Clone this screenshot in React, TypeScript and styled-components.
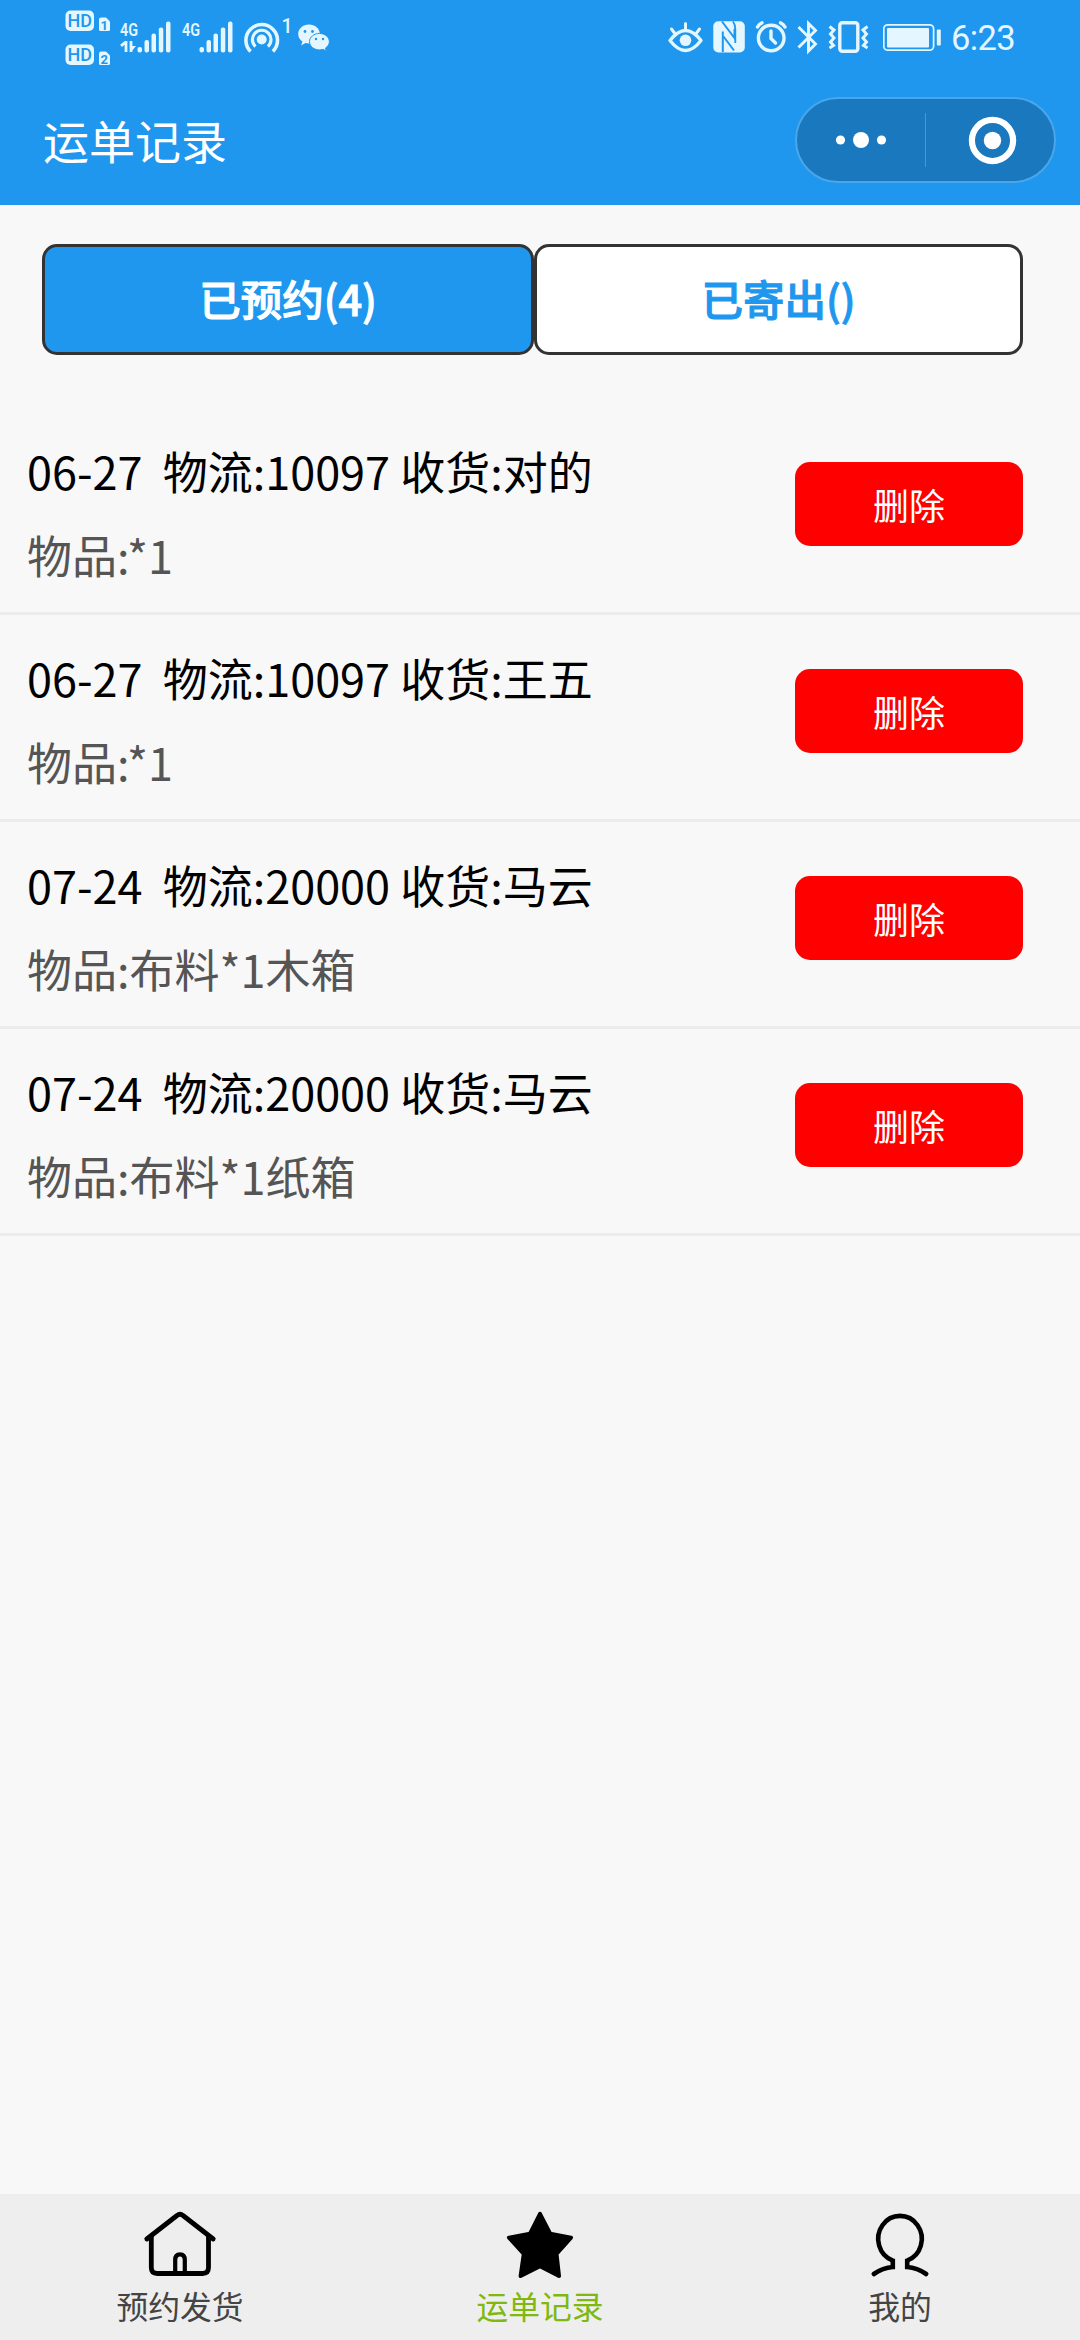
import React from "react";
import styled, { createGlobalStyle } from "styled-components";

const BLUE = "#1f97ee";
const PALE = "#e4f6ff";
const CJK = `"Noto Sans CJK SC", "Noto Sans", sans-serif`;

const GlobalStyle = createGlobalStyle`
  * { box-sizing: border-box; }
  body { margin: 0; background: #f8f8f8; font-family: ${CJK}; }
`;

const Screen = styled.div`
  display: flex;
  flex-direction: column;
  width: 1080px;
  height: 2340px;
  overflow: hidden;
  background: #f8f8f8;
`;

const Header = styled.header`
  height: 205px;
  flex: none;
  background: ${BLUE};
`;

const StatusBar = styled.div`
  display: flex;
  justify-content: space-between;
  height: 75px;
  padding: 0 63px 0 64px;
`;

const StatusGroup = styled.div`
  display: flex;
  align-items: flex-start;
`;

const Glyph = styled.svg<{ $gap?: number }>`
  display: block;
  flex: none;
  margin-left: ${(p) => p.$gap ?? 0}px;
`;

const Clock = styled.span`
  width: 66px;
  margin-left: 8px;
  font: 400 34.5px/76px Roboto, sans-serif;
  letter-spacing: -0.6px;
  white-space: nowrap;
  color: ${PALE};
`;

const TitleBar = styled.div`
  display: flex;
  align-items: center;
  justify-content: space-between;
  height: 130px;
  padding: 0 24px 0 43px;
`;

const Title = styled.h1`
  margin: 0;
  padding-bottom: 3px;
  font-size: 46px;
  line-height: 60px;
  font-weight: 400;
  color: #fff;
`;

const Capsule = styled.div`
  display: flex;
  align-items: center;
  width: 261px;
  height: 86px;
  border: 2px solid #4aa6ea;
  border-radius: 43px;
  background: #1978be;
`;

const CapsuleHalf = styled.div`
  display: flex;
  flex: 1;
  align-items: center;
  justify-content: center;
`;

const CapsuleDivider = styled.div`
  width: 1px;
  height: 54px;
  background: #4a97d2;
`;

const Tabs = styled.nav`
  display: flex;
  flex: none;
  height: 111px;
  margin: 39px 57px 53px 42px;
`;

const Tab = styled.button<{ $active?: boolean }>`
  flex: ${(p) => (p.$active ? "0 0 492px" : "1")};
  padding: 0 0 3px;
  border: 3px solid #333;
  border-radius: 15px;
  background: ${(p) => (p.$active ? BLUE : "#fff")};
  color: ${(p) => (p.$active ? "#fff" : BLUE)};
  font: 500 41.5px/60px ${CJK};
  -webkit-text-stroke: 1px currentColor;
`;

const List = styled.ul`
  flex: 1;
  margin: 0;
  padding: 0;
  list-style: none;
`;

const Row = styled.li`
  display: flex;
  align-items: center;
  justify-content: space-between;
  height: 207px;
  padding: 0 57px 0 27px;
  border-bottom: 3px solid #ececec;
`;

const Summary = styled.div`
  padding-top: 6px;
`;

const Line = styled.p<{ $muted?: boolean }>`
  margin: 0;
  font-size: 45px;
  line-height: 84px;
  white-space: pre;
  color: ${(p) => (p.$muted ? "#555" : "#000")};
`;

const DeleteButton = styled.button`
  width: 228px;
  height: 84px;
  margin-top: -12px;
  padding: 0;
  border: 0;
  border-radius: 15px;
  background: #fe0000;
  color: #fff;
  font: 400 36px/50px ${CJK};
`;

const BottomBar = styled.nav`
  display: flex;
  flex: none;
  height: 146px;
  background: #eeeeee;
`;

const BottomItem = styled.a<{ $active?: boolean }>`
  display: flex;
  flex: 1;
  flex-direction: column;
  align-items: center;
  padding-top: 10px;
  font-size: 31.8px;
  line-height: 40px;
  color: ${(p) => (p.$active ? "#7fb80e" : "#444")};
`;

const BottomIcon = styled.svg`
  display: block;
  width: 80px;
  height: 80px;
  margin-bottom: 1px;
`;

const SimBadges = () => (
  <Glyph width="48" height="75" viewBox="64 0 48 75" fill={PALE}>
    {[0, 34].map((y, i) => (
      <g key={y} transform={`translate(0 ${y})`}>
        <rect x="65.5" y="10.5" width="28.5" height="20.5" rx="5" />
        <text x="79.7" y="27.2" textAnchor="middle" fontFamily="Roboto, sans-serif" fontSize="18" fontWeight="500" fill={BLUE}>HD</text>
        <path d="M99 19.500q0-2 2-2h5l4 4v8q0 1.500-1.500 1.500h-8q-1.500 0-1.500-1.500z" />
        <text x="104.300" y="29.500" textAnchor="middle" fontFamily="Roboto, sans-serif" fontSize="13" fontWeight="700" fill={BLUE}>{i + 1}</text>
      </g>
    ))}
  </Glyph>
);

const Signal = ({ data, gap }: { data?: boolean; gap: number }) => (
  <Glyph $gap={gap} width="52" height="75" viewBox="119 0 52 75" fill={PALE}>
    <text x="120" y="35.500" fontFamily="Roboto, sans-serif" fontSize="19" fontWeight="600" textLength="18" lengthAdjust="spacingAndGlyphs">4G</text>
    {data && (
      <>
        <path d="M121 45.800l5-4M126 41v11M131 41v11" fill="none" stroke={PALE} strokeWidth="2.800" />
        <path d="M131 52v-6h5z" />
      </>
    )}
    <rect x="137.500" y="47" width="4.500" height="5.500" rx="2" />
    <rect x="144.500" y="40" width="4.500" height="12.500" rx="2" />
    <rect x="151.500" y="33.500" width="4.500" height="19" rx="2" />
    <rect x="158.800" y="27.500" width="4.500" height="25" rx="2" />
    <rect x="166" y="21.500" width="4.500" height="31" rx="2" />
  </Glyph>
);

const Hotspot = () => (
  <Glyph $gap={10} width="50" height="75" viewBox="242 0 50 75" fill="none" stroke={PALE} strokeWidth="3.6">
    <circle cx="260.700" cy="39.500" r="5" fill={PALE} stroke="none" />
    <path d="M254.500 46.500a9.300 9.300 0 1 1 12.400 0" strokeWidth="3.200" />
    <path d="M249.500 51.500a15.800 15.800 0 1 1 22.400 0" />
    <text x="280.500" y="32.500" fontFamily="Roboto, sans-serif" fontSize="19.5" fontWeight="500" fill={PALE} stroke="none">1</text>
  </Glyph>
);

const Chat = () => (
  <Glyph $gap={4} width="34" height="75" viewBox="296 0 34 75" fill={PALE}>
    <path d="M308 24.500c-6 0-10.800 4.200-10.800 9.500 0 3.200 1.500 5.600 4.200 7.600l-1.300 3.900 4.400-2.500 3.500.5c6 0 10.800-4 10.800-9.500s-4.800-9.500-10.800-9.500z" />
    <path d="M318.500 33.400c-5.700 0-10 3.900-10 8.300s4.300 8.200 10 8.200c1.200 0 2.400-.2 3.600-.6l3.300 1.900-.9-3.200c2.400-1.700 3.900-3.900 3.900-6.300 0-4.400-4.300-8.300-9.900-8.300z" stroke={BLUE} strokeWidth="1" />
    <g fill={BLUE}>
      <circle cx="304" cy="31.500" r="1.400" />
      <circle cx="311.500" cy="31.500" r="1.400" />
      <circle cx="315" cy="39" r="1.200" />
      <circle cx="322" cy="39" r="1.200" />
    </g>
  </Glyph>
);

const Eye = () => (
  <Glyph width="37" height="75" viewBox="667 0 37 75" fill="none" stroke={PALE} strokeWidth="3.400" strokeLinecap="round">
    <path d="M670 40.500q15.500-20 31 0q-15.500 20-31 0z" strokeLinejoin="round" />
    <circle cx="685.500" cy="40.300" r="5.800" fill={PALE} stroke="none" />
    <path d="M685.500 23.500v6M671.500 29l3 4M699.500 29l-3 4" strokeWidth="3" />
  </Glyph>
);

const Nfc = () => (
  <Glyph $gap={9} width="32" height="75" viewBox="713 0 32 75">
    <rect x="713.300" y="21.300" width="31.500" height="31.200" rx="5" fill={PALE} />
    <path d="M722.800 52V31.500M723.500 36.500l10.500 14M722 21.500L734.500 38V29" fill="none" stroke={BLUE} strokeWidth="2" />
    <path d="M733 21.500q2.300 3 2.300 8V43" fill="none" stroke={BLUE} strokeWidth="1.800" />
  </Glyph>
);

const Alarm = () => (
  <Glyph $gap={10} width="34" height="75" viewBox="755 0 34 75" fill="none" stroke={PALE} strokeWidth="3.400" strokeLinecap="round">
    <circle cx="771.200" cy="38" r="12.800" />
    <path d="M771 31v7.500l4.500 4.500" />
    <path d="M757.500 27q1.500-3 4.500-4.200M785 27q-1.500-3-4.500-4.200" />
  </Glyph>
);

const Bluetooth = () => (
  <Glyph $gap={7} width="24" height="75" viewBox="796 0 24 75" fill="none" stroke={PALE} strokeWidth="2.900" strokeLinejoin="miter">
    <path d="M798.500 27l17 17-7 7V23.500l7 7-17 17" />
  </Glyph>
);

const Vibrate = () => (
  <Glyph $gap={8} width="42" height="75" viewBox="828 0 42 75" fill="none" stroke={PALE} strokeWidth="3.400">
    <rect x="839.800" y="22.800" width="18" height="28.400" rx="2.500" />
    <path d="M829.500 26.500l4.500 3.500-3.500 4 3.500 4-3.500 4 3 3.500-4 2.500M867.500 26.500l-4.500 3.500 3.500 4-3.500 4 3.500 4-3 3.500 4 2.500" strokeWidth="3" />
  </Glyph>
);

const Battery = () => (
  <Glyph $gap={13} width="60" height="75" viewBox="883 0 60 75">
    <rect x="883.800" y="24.800" width="49.800" height="25.400" rx="4" fill="none" stroke={PALE} strokeWidth="1.700" />
    <rect x="887" y="28" width="42" height="19.500" rx="1" fill={PALE} />
    <rect x="936.800" y="29.500" width="4" height="16" rx="1" fill={PALE} />
  </Glyph>
);

const HomeIcon = () => (
  <BottomIcon viewBox="140 2204 80 80" fill="none" stroke="#000" strokeWidth="4.800" strokeLinecap="round" strokeLinejoin="round">
    <path d="M146.800 2239L177 2215.500q3-2.600 6 0L213.200 2239" />
    <path d="M151.300 2237v30.500q0 6 6 6h45.200q6 0 6-6V2237" />
    <path d="M175.200 2273v-13q0-5.600 4.800-5.600t4.800 5.600v13" strokeWidth="4.200" />
  </BottomIcon>
);

const StarIcon = () => (
  <BottomIcon viewBox="500 2204 80 80" fill="#000" stroke="#000" strokeWidth="4" strokeLinejoin="round">
    <path d="M540 2213.800L550.200 2233.600L571 2237.600L556.500 2253.800L559 2276L540 2266.200L520.600 2276L523.800 2253.800L509 2237.600L530 2233.600Z" />
  </BottomIcon>
);

const UserIcon = () => (
  <BottomIcon viewBox="860 2204 80 80" fill="none" stroke="#000" strokeWidth="4.600" strokeLinecap="round">
    <path d="M873.800 2274q9-6.300 19-7v-6.400A21.800 23 0 1 1 907.200 2260.600v6.400q10 .7 19 7" />
  </BottomIcon>
);

const waybills = [
  { title: "06-27  物流:10097 收货:对的", goods: "物品:*1" },
  { title: "06-27  物流:10097 收货:王五", goods: "物品:*1" },
  { title: "07-24  物流:20000 收货:马云", goods: "物品:布料*1木箱" },
  { title: "07-24  物流:20000 收货:马云", goods: "物品:布料*1纸箱" },
];

export default function App() {
  return (
    <Screen>
      <GlobalStyle />
      <Header>
        <StatusBar>
          <StatusGroup>
            <SimBadges />
            <Signal gap={7} data />
            <Signal gap={10} />
            <Hotspot />
            <Chat />
          </StatusGroup>
          <StatusGroup>
            <Eye />
            <Nfc />
            <Alarm />
            <Bluetooth />
            <Vibrate />
            <Battery />
            <Clock>6:23</Clock>
          </StatusGroup>
        </StatusBar>
        <TitleBar>
          <Title>运单记录</Title>
          <Capsule>
            <CapsuleHalf>
              <svg width="52" height="20" fill="#fff">
                <circle cx="5.500" cy="10" r="4.600" />
                <circle cx="26" cy="10" r="8" />
                <circle cx="46.500" cy="10" r="4.600" />
              </svg>
            </CapsuleHalf>
            <CapsuleDivider />
            <CapsuleHalf>
              <svg width="54" height="54" fill="none" stroke="#fff">
                <circle cx="29.500" cy="27.500" r="20.600" strokeWidth="6.200" />
                <circle cx="29.500" cy="27.500" r="8.700" fill="#fff" stroke="none" />
              </svg>
            </CapsuleHalf>
          </Capsule>
        </TitleBar>
      </Header>
      <Tabs>
        <Tab $active>已预约(4)</Tab>
        <Tab>已寄出()</Tab>
      </Tabs>
      <List>
        {waybills.map((w, i) => (
          <Row key={i}>
            <Summary>
              <Line>{w.title}</Line>
              <Line $muted>{w.goods}</Line>
            </Summary>
            <DeleteButton>删除</DeleteButton>
          </Row>
        ))}
      </List>
      <BottomBar>
        <BottomItem>
          <HomeIcon />
          预约发货
        </BottomItem>
        <BottomItem $active>
          <StarIcon />
          运单记录
        </BottomItem>
        <BottomItem>
          <UserIcon />
          我的
        </BottomItem>
      </BottomBar>
    </Screen>
  );
}
